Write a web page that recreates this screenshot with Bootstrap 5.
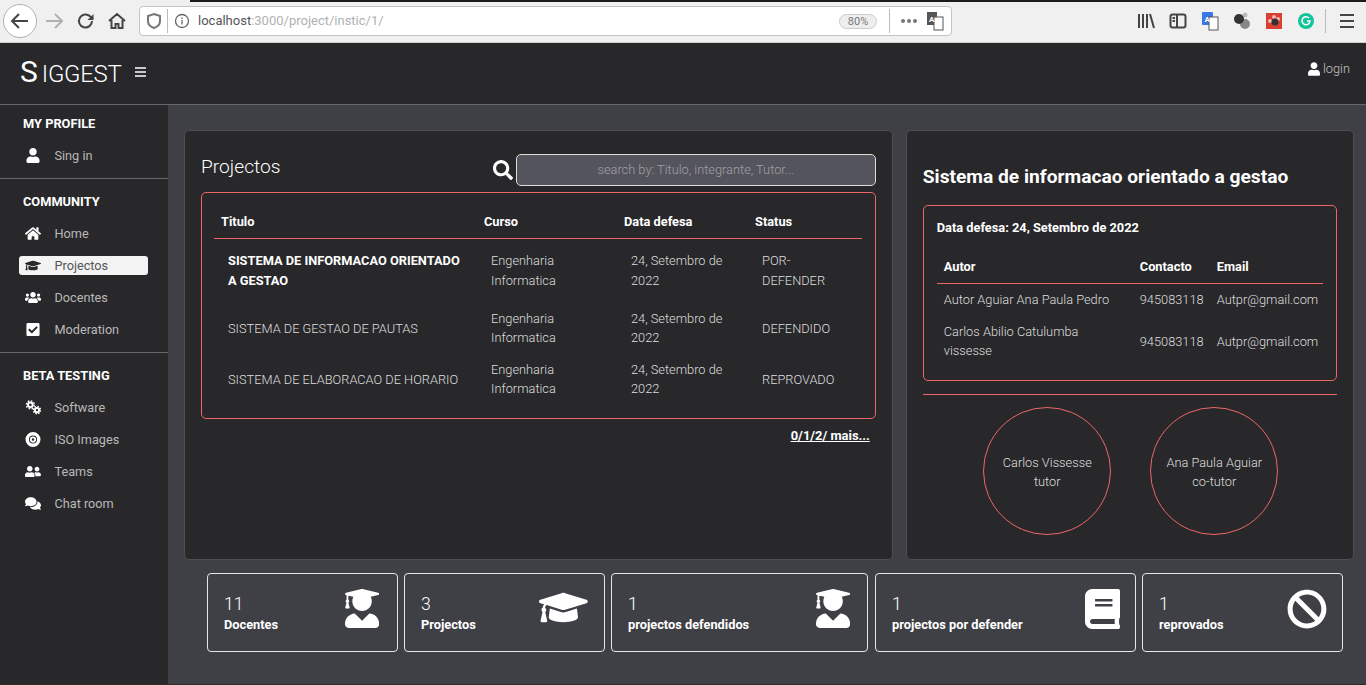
<!DOCTYPE html>
<html lang="en">
<head>
<meta charset="UTF-8">
<title>Siggest</title>
<link href="https://cdn.jsdelivr.net/npm/bootstrap@5.3.3/dist/css/bootstrap.min.css" rel="stylesheet"/>
<style>
  html, body { height: 100%; overflow: hidden; }
  body { font-family: Roboto, "Liberation Sans", sans-serif; font-size: 12.7px; background: #3f3f46; color: #fff; }
  .ff-bar { height: 43px; background: #f0f0f0; border-bottom: 1px solid #d0d0d0; position: relative; }
  .ff-strip { position: absolute; left: 190px; right: 0; top: 0; height: 2px; background: #1c1c1c; }
  .ff-back { width: 34px; height: 34px; margin-left: 3px; border: 1px solid #b1b1b3; border-radius: 50%; background: #fff; }
  .ff-url { width: 813px; height: 30px; margin-left: 11px; background: #fff; border: 1px solid #c4c4c4; border-radius: 4px; color: #b1b1b3; font-size: 13px; padding: 0 5px 0 3px; }
  .ff-url b { color: #55555c; font-weight: 400; }
  .ff-sep { width: 1px; height: 24px; background: #bbb; flex: none; }
  .shield-sep { margin: 0 3px 0 2px; }
  .zoom-sep { margin: 0 8px 0 12px; }
  .ff-zoom { width: 38px; height: 15px; border: 1px solid #ccc; background: #eee; border-radius: 8px; font-size: 11px; line-height: 13px; text-align: center; color: #777; }
  .ff-ico { width: 22px; height: 22px; flex: none; }
  .ff-tools { gap: 10px; }
  .nav-fwd { margin-left: 6px; }
  .nav-reload { margin-left: 10px; }
  .nav-home { margin-left: 9px; }
  .url-text { margin-left: 5px; }
  .tools-sep { margin-left: -2px; }
  .ico-letter { font-family: Roboto, sans-serif; font-size: 8px; font-weight: 700; }
  .top-head { height: 62px; background: #28282b; border-bottom: 1px solid #67676b; padding: 0 16px 0 20px; }
  .brand-row { margin-top: -3px; }
  .brand-name { font-size: 24px; font-weight: 300; color: #fff; letter-spacing: -.3px; line-height: 1; }
  .brand-name span { font-size: 30px; font-weight: 400; margin-right: 4px; letter-spacing: 0; }
  .brand-menu { margin-left: 14px; }
  .login-link { color: #c6c6c6; font-size: 12.8px; text-decoration: none; font-weight: 300; margin-top: -9px; }
  .login-link svg { margin-right: 3px; }
  .page-row { min-height: 0; border-bottom: 1px solid #2b2b2e; }
  .side-col { width: 168px; background: #28282b; flex: none; }
  .side-part { padding: 14px 0 0 0; border-bottom: 1px solid #67676b; }
  .side-part:first-child { padding-top: 10px; }
  .side-part:last-child { border-bottom: 0; }
  .side-title { font-size: 12.8px; font-weight: 700; padding-left: 23px; line-height: 18px; margin-bottom: 13px; color: #fff; }
  .side-link { height: 19px; margin: 0 20px 13px 19px; padding: 0 0 0 6px; border-radius: 3px; color: #b9b9b9; font-size: 12.7px; text-decoration: none; }
  .side-link svg { width: 16px; height: 15px; fill: #fff; flex: none; margin-right: 13.5px; }
  .side-link.now { background: #f3f3f3; color: #555; }
  .side-link.now svg { fill: #28282b; }
  .main-col { padding: 25px 12px 0 16px; min-width: 0; }
  .dark-card { background: #28282b; border: 1px solid #4d4d52; border-radius: 5px; height: 430px; color: #fff; }
  .cards-row { gap: 13px; }
  .left-card { width: 710px; padding: 23px 16px 0 16px; }
  .right-card { width: 449px; padding: 35px 16px 0 16px; }
  .page-title { font-size: 19.2px; font-weight: 300; margin: -6px 0 0; color: #fff; }
  .search-ico { width: 20px; height: 20px; fill: #fff; margin-right: 3px; }
  .search-box.form-control { width: 360px; height: 32px; background: #54545c; border: 1px solid #ddd; border-radius: 5px; font-size: 12.8px; font-weight: 300; text-align: center; color: #fff; padding: 0 8px 2px; box-shadow: none; }
  .search-box::placeholder { color: #a0a0a6; }
  .red-box { border: 1px solid #ee6666; border-radius: 5px; }
  .table-box { margin-top: 6px; height: 227px; padding: 12px 13px 0 12px; }
  .col-titulo { width: 263px; }
  .col-curso { width: 140px; }
  .col-data { width: 131px; }
  .col-autor { width: 197px; }
  .col-contacto { width: 77px; }
  .data-table.table { --bs-table-bg: transparent; --bs-table-color: #dedede; color: #dedede; table-layout: fixed; margin: 0; font-size: 12.8px; font-weight: 300; }
  .data-table th { color: #fff; font-weight: 700; font-size: 12.8px; padding: 7px 7px 7px; border-bottom: 1px solid #ee6666; }
  .data-table td { padding: 6.4px 6.4px 6.4px 14px; border: 0; vertical-align: middle; line-height: 19.2px; }
  .data-table td:first-child { padding-right: 14px; }
  .data-table td:last-child { padding-right: 24px; }
  .data-table tr.first-row td { padding-top: 12px; padding-bottom: 11.5px; line-height: 20px; }
  .data-table td strong { color: #fff; font-weight: 700; font-size: 12.8px; }
  .pager-text { text-align: right; font-weight: 700; font-size: 12.9px; color: #fff; text-decoration: underline; margin: 7px 6px 0 0; }
  .detail-title { font-size: 19.2px; font-weight: 700; margin: 0 0 17px; line-height: 22px; color: #fff; white-space: nowrap; }
  .detail-box { height: 176px; padding: 13px 13px 0; }
  .detail-date { font-size: 12.8px; font-weight: 700; line-height: 18px; margin-bottom: 12px; }
  .detail-table.table th { padding: 8px 6px 7px; font-size: 12.8px; }
  .detail-table.table th:first-child { padding-left: 7px; }
  .detail-table.table td { padding: 5.9px 0 6.9px 6px; }
  .detail-table.table td:first-child { padding-left: 7px; padding-right: 20px; }
  .detail-rule { border: 0; border-top: 1px solid #ee6666; opacity: 1; margin: 13px 0 12px; }
  .tutor-ring { width: 128px; height: 128px; border: 1px solid #ee6666; border-radius: 50%; text-align: center; color: #dedede; font-weight: 300; font-size: 12.8px; line-height: 19.2px; padding: 2px 0 0 1px; }
  .rings-row { gap: 39px; padding-left: 60px; }
  .stats-row { margin: 13px 0 0 23px; gap: 6px; }
  .stat-box { height: 79px; border: 1px solid #e6e6e6; border-radius: 4px; padding: 19px 15px 0 16px; }
  .stat-docentes { width: 191px; }
  .stat-projectos { width: 201px; }
  .stat-defendidos { width: 257px; margin-right: 1px; }
  .stat-defender { width: 261px; }
  .stat-reprovados { width: 201px; }
  .stat-num { font-size: 17.6px; font-weight: 300; line-height: 23px; }
  .stat-label { font-size: 12.8px; font-weight: 700; line-height: 18px; }
  .stat-box svg { fill: #fff; height: 40px; margin-top: -4px; flex: none; }
  .stat-box svg.grad-ico { height: 39px; margin-right: 3px; }
  .stat-box svg.grad-ico.grad-end { margin-right: 2px; }
  .stat-box svg.cap-ico { height: 39px; margin-top: -5px; margin-right: 1px; }
</style>
</head>
<body class="d-flex flex-column">

  <div class="ff-bar d-flex align-items-center flex-none">
    <div class="ff-strip"></div>
    <div class="ff-back d-flex align-items-center justify-content-center">
      <svg class="ff-ico" viewBox="0 0 22 22" fill="none" stroke="#444" stroke-width="2"><path d="M19 11H4M10 4l-7 7 7 7"/></svg>
    </div>
    <svg class="ff-ico nav-fwd" viewBox="0 0 22 22" fill="none" stroke="#b1b1b3" stroke-width="2"><path d="M3 11h15M12 4l7 7-7 7"/></svg>
    <svg class="ff-ico nav-reload" viewBox="0 0 22 22" fill="none" stroke="#444" stroke-width="2"><path d="M17 11a6.500 6.500 0 1 1-2-4.700L18 9"/><path d="M18.500 4v6h-6" fill="#444" stroke="none"/></svg>
    <svg class="ff-ico nav-home" viewBox="0 0 22 22" fill="none" stroke="#444" stroke-width="2"><path d="M3 11l8-7 8 7M5.500 10v8h4v-4h3v4h4v-8"/></svg>
    <div class="ff-url d-flex align-items-center">
      <svg class="ff-ico" viewBox="0 0 22 22" fill="none" stroke="#777" stroke-width="2"><path d="M11 4l6 2v5c0 4-3 6-6 7-3-1-6-3-6-7V6z"/></svg>
      <div class="ff-sep shield-sep"></div>
      <svg class="ff-ico" viewBox="0 0 22 22" fill="none" stroke="#666" stroke-width="1.300"><circle cx="11" cy="11" r="6.500"/><path d="M11 10v4.500M11 7.500v1.500"/></svg>
      <span class="url-text"><b>localhost</b>:3000/project/instic/1/</span>
      <div class="ff-zoom ms-auto">80%</div>
      <div class="ff-sep zoom-sep"></div>
      <svg class="ff-ico" viewBox="0 0 22 22" fill="#777"><circle cx="5" cy="11" r="2"/><circle cx="11" cy="11" r="2"/><circle cx="17" cy="11" r="2"/></svg>
      <svg class="ff-ico ms-1" viewBox="0 0 22 22"><rect x="3" y="2" width="10" height="13" fill="#555"/><rect x="10" y="7" width="9" height="13" fill="#fff" stroke="#555"/><text class="ico-letter" x="5" y="12" fill="#fff">A</text></svg>
    </div>
    <div class="ff-tools d-flex align-items-center ms-auto">
      <svg class="ff-ico" viewBox="0 0 22 22" fill="none" stroke="#444" stroke-width="2"><path d="M4 4v14M8 4v14M12 4v14M15 4l4 14"/></svg>
      <svg class="ff-ico" viewBox="0 0 22 22" fill="none" stroke="#444" stroke-width="2"><rect x="3.500" y="4.500" width="15" height="13" rx="2"/><path d="M10 5v12M5.500 8H8M5.500 11H8"/></svg>
      <svg class="ff-ico" viewBox="0 0 22 22"><rect x="3" y="2" width="11" height="13" rx="1" fill="#3b78e7"/><rect x="10" y="7" width="9" height="13" fill="#fff" stroke="#555"/><text class="ico-letter" x="5.500" y="12" fill="#fff">A</text></svg>
      <svg class="ff-ico" viewBox="0 0 22 22"><circle cx="14" cy="14" r="5" fill="#888"/><circle cx="14" cy="5" r="2.500" fill="#bbb"/><circle cx="8" cy="9" r="5" fill="#333"/></svg>
      <svg class="ff-ico" viewBox="0 0 22 22"><rect x="3" y="3" width="16" height="16" fill="#d94032"/><circle cx="11" cy="7" r="2" fill="#f2b8b2"/><circle cx="7" cy="11" r="2" fill="#f2b8b2"/><circle cx="15" cy="9" r="2" fill="#f2b8b2"/><circle cx="12" cy="12" r="3.500" fill="#333"/></svg>
      <svg class="ff-ico" viewBox="0 0 22 22"><circle cx="11" cy="11" r="8" fill="#15c39a"/><path d="M14 8a4 4 0 1 0 1 3h-3" fill="none" stroke="#fff" stroke-width="1.500"/></svg>
      <div class="ff-sep tools-sep"></div>
      <svg class="ff-ico me-2" viewBox="0 0 22 22" fill="none" stroke="#444" stroke-width="2"><path d="M4 5h14M4 11h14M4 17h14"/></svg>
    </div>
  </div>

  <header class="top-head d-flex align-items-center justify-content-between">
    <div class="brand-row d-flex align-items-center">
      <div class="brand-name"><span>S</span>IGGEST</div>
      <svg class="brand-menu" width="11" height="10" viewBox="0 0 11 10" fill="none" stroke="#fff" stroke-width="1.500"><path d="M0 1h11M0 5h11M0 9h11"/></svg>
    </div>
    <a class="login-link d-flex align-items-center" href="#">
      <svg width="12" height="14" viewBox="0 0 448 512" fill="#fff"><path d="M224 256c70.700 0 128-57.300 128-128S294.700 0 224 0 96 57.300 96 128s57.300 128 128 128zm89.600 32h-16.700c-22.200 10.200-46.900 16-72.900 16s-50.600-5.800-72.900-16h-16.700C60.200 288 0 348.200 0 422.400V464c0 26.500 21.500 48 48 48h352c26.500 0 48-21.500 48-48v-41.600c0-74.200-60.200-134.400-134.400-134.400z"/></svg>login
    </a>
  </header>

  <div class="page-row d-flex flex-grow-1">
    <aside class="side-col">
      <div class="side-part">
        <div class="side-title">MY PROFILE</div>
        <a class="side-link d-flex align-items-center" href="#"><svg viewBox="0 0 448 512"><path d="M224 256c70.700 0 128-57.300 128-128S294.700 0 224 0 96 57.300 96 128s57.300 128 128 128zm89.600 32h-16.700c-22.200 10.200-46.900 16-72.900 16s-50.600-5.800-72.900-16h-16.700C60.200 288 0 348.200 0 422.400V464c0 26.500 21.500 48 48 48h352c26.500 0 48-21.500 48-48v-41.600c0-74.200-60.200-134.400-134.400-134.400z"/></svg>Sing in</a>
      </div>
      <div class="side-part">
        <div class="side-title">COMMUNITY</div>
        <a class="side-link d-flex align-items-center" href="#"><svg viewBox="0 0 576 512"><path d="M280.370 148.260L96 300.110V464a16 16 0 0 0 16 16l112.060-.29a16 16 0 0 0 15.920-16V368a16 16 0 0 1 16-16h64a16 16 0 0 1 16 16v95.640a16 16 0 0 0 16 16.050L464 480a16 16 0 0 0 16-16V300L295.670 148.260a12.190 12.190 0 0 0-15.300 0zM571.600 251.470L488 182.560V44.050a12 12 0 0 0-12-12h-56a12 12 0 0 0-12 12v72.610L318.470 43a48 48 0 0 0-61 0L4.340 251.470a12 12 0 0 0-1.600 16.900l25.500 31A12 12 0 0 0 45.150 301l235.220-193.740a12.190 12.190 0 0 1 15.300 0L530.900 301a12 12 0 0 0 16.900-1.600l25.500-31a12 12 0 0 0-1.700-16.930z"/></svg>Home</a>
        <a class="side-link now d-flex align-items-center" href="#"><svg viewBox="0 0 640 512"><path d="M622.340 153.200L343.400 67.500c-15.200-4.670-31.600-4.670-46.790 0L17.660 153.200c-23.540 7.230-23.540 38.360 0 45.590l48.630 14.940c-10.670 13.190-17.230 29.280-17.880 46.900C38.780 266.150 32 276.110 32 288c0 10.780 5.680 19.850 13.860 25.650L20.330 428.530C18.110 438.520 25.710 448 35.940 448h56.110c10.240 0 17.840-9.480 15.620-19.470L82.140 313.650C90.320 307.850 96 298.780 96 288c0-11.570-6.470-21.250-15.660-26.870.76-15.020 8.440-28.300 20.690-36.720L296.600 284.500c9.060 2.780 26.440 6.250 46.790 0l278.950-85.700c23.550-7.240 23.550-38.360 0-45.600zM352.790 315.090c-28.530 8.760-52.840 3.920-65.590 0l-145.020-44.550L128 384c0 35.350 85.960 64 192 64s192-28.650 192-64l-14.180-113.470-145.030 44.560z"/></svg>Projectos</a>
        <a class="side-link d-flex align-items-center" href="#"><svg viewBox="0 0 640 512"><path d="M96 224c35.300 0 64-28.700 64-64s-28.700-64-64-64-64 28.700-64 64 28.700 64 64 64zm448 0c35.300 0 64-28.700 64-64s-28.700-64-64-64-64 28.700-64 64 28.700 64 64 64zm32 32h-64c-17.600 0-33.500 7.100-45.100 18.600 40.300 22.100 68.900 62 75.100 109.400h66c17.700 0 32-14.300 32-32v-32c0-35.300-28.700-64-64-64zm-256 0c61.900 0 112-50.100 112-112S381.900 32 320 32 208 82.100 208 144s50.100 112 112 112zm76.800 32h-8.300c-20.800 10-43.900 16-68.500 16s-47.600-6-68.500-16h-8.300C179.600 288 128 339.600 128 403.200V432c0 26.500 21.500 48 48 48h288c26.500 0 48-21.500 48-48v-28.800c0-63.600-51.600-115.200-115.200-115.200zm-223.700-13.400C161.500 263.100 145.600 256 128 256H64c-35.300 0-64 28.700-64 64v32c0 17.700 14.300 32 32 32h65.900c6.300-47.400 34.900-87.300 75.200-109.400z"/></svg>Docentes</a>
        <a class="side-link d-flex align-items-center" href="#"><svg viewBox="0 0 448 512"><path d="M400 480H48c-26.510 0-48-21.490-48-48V80c0-26.510 21.490-48 48-48h352c26.510 0 48 21.490 48 48v352c0 26.510-21.490 48-48 48zm-204.686-98.059l184-184c6.248-6.248 6.248-16.379 0-22.627l-22.627-22.627c-6.248-6.248-16.379-6.249-22.628 0L184 302.745l-70.059-70.059c-6.248-6.248-16.379-6.248-22.628 0L68.686 255.314c-6.248 6.248-6.248 16.379 0 22.627l104 104c6.249 6.250 16.379 6.250 22.628 0z"/></svg>Moderation</a>
      </div>
      <div class="side-part">
        <div class="side-title">BETA TESTING</div>
        <a class="side-link d-flex align-items-center" href="#"><svg viewBox="0 0 24 22"><circle cx="8" cy="7" r="3.500" fill="none" stroke="#fff" stroke-width="3"/><circle cx="8" cy="7" r="6" fill="none" stroke="#fff" stroke-width="2" stroke-dasharray="2.500 2.200"/><circle cx="18" cy="15" r="3.200" fill="none" stroke="#fff" stroke-width="3"/><circle cx="18" cy="15" r="5.500" fill="none" stroke="#fff" stroke-width="2" stroke-dasharray="2.300 2"/></svg>Software</a>
        <a class="side-link d-flex align-items-center" href="#"><svg viewBox="0 0 24 24"><path fill-rule="evenodd" d="M12 0a12 12 0 1 0 0 24 12 12 0 0 0 0-24zm0 5.500a6.500 6.500 0 1 1 0 13 6.500 6.500 0 0 1 0-13zm0 1.500a5 5 0 1 0 0 10 5 5 0 0 0 0-10zm0 3a2 2 0 1 1 0 4 2 2 0 0 1 0-4z"/></svg>ISO Images</a>
        <a class="side-link d-flex align-items-center" href="#"><svg viewBox="0 0 640 512"><path d="M192 256c61.900 0 112-50.100 112-112S253.900 32 192 32 80 82.100 80 144s50.100 112 112 112zm76.800 32h-8.300c-20.800 10-43.900 16-68.500 16s-47.600-6-68.500-16h-8.300C51.600 288 0 339.600 0 403.200V432c0 26.500 21.500 48 48 48h288c26.500 0 48-21.500 48-48v-28.800c0-63.600-51.600-115.200-115.200-115.200zM480 256c53 0 96-43 96-96s-43-96-96-96-96 43-96 96 43 96 96 96zm48 32h-3.800c-13.900 4.800-28.600 8-44.200 8s-30.300-3.200-44.200-8H432c-20.400 0-39.200 5.900-55.700 15.400 24.400 26.300 39.700 61.200 39.700 99.800v38.400c0 2.200-.5 4.300-.6 6.400H592c26.500 0 48-21.500 48-48 0-61.900-50.100-112-112-112z"/></svg>Teams</a>
        <a class="side-link d-flex align-items-center" href="#"><svg viewBox="0 0 576 512"><path d="M416 192c0-88.400-93.100-160-208-160S0 103.600 0 192c0 34.300 14.100 65.900 38 92-13.400 30.200-35.500 54.200-35.800 54.500-2.200 2.300-2.800 5.700-1.500 8.700S4.800 352 8 352c36.600 0 66.900-12.300 88.700-25 32.200 15.700 70.300 25 111.300 25 114.900 0 208-71.600 208-160zm122 220c23.900-26 38-57.700 38-92 0-66.900-53.500-124.200-129.300-148.100.9 6.600 1.300 13.300 1.300 20.100 0 105.900-107.700 192-240 192-10.800 0-21.300-.8-31.700-1.900C207.800 439.600 281.800 480 368 480c41 0 79.100-9.200 111.300-25 21.800 12.700 52.100 25 88.700 25 3.200 0 6.100-1.900 7.300-4.800 1.300-2.900.7-6.300-1.500-8.700-.3-.3-22.400-24.200-35.800-54.500z"/></svg>Chat room</a>
      </div>
    </aside>

    <main class="main-col flex-grow-1">
      <div class="cards-row d-flex">
        <section class="dark-card left-card">
          <div class="d-flex align-items-center justify-content-between">
            <h2 class="page-title">Projectos</h2>
            <div class="d-flex align-items-center">
              <svg class="search-ico" viewBox="0 0 512 512"><path d="M505 442.700L405.300 343c-4.500-4.500-10.600-7-17-7H372c27.600-35.300 44-79.700 44-128C416 93.100 322.900 0 208 0S0 93.100 0 208s93.100 208 208 208c48.300 0 92.700-16.400 128-44v16.300c0 6.400 2.500 12.500 7 17l99.700 99.700c9.400 9.400 24.600 9.400 33.900 0l28.300-28.300c9.400-9.400 9.400-24.600.1-34zM208 336c-70.700 0-128-57.200-128-128 0-70.700 57.200-128 128-128 70.700 0 128 57.200 128 128 0 70.700-57.200 128-128 128z"/></svg>
              <input class="search-box form-control" type="text" placeholder="search by: Titulo, integrante, Tutor...">
            </div>
          </div>
          <div class="red-box table-box">
            <table class="data-table table">
              <colgroup><col class="col-titulo"><col class="col-curso"><col class="col-data"><col></colgroup>
              <thead><tr><th>Titulo</th><th>Curso</th><th>Data defesa</th><th>Status</th></tr></thead>
              <tbody>
                <tr class="first-row"><td><strong>SISTEMA DE INFORMACAO ORIENTADO A GESTAO</strong></td><td>Engenharia Informatica</td><td>24, Setembro de 2022</td><td>POR-DEFENDER</td></tr>
                <tr><td>SISTEMA DE GESTAO DE PAUTAS</td><td>Engenharia Informatica</td><td>24, Setembro de 2022</td><td>DEFENDIDO</td></tr>
                <tr><td>SISTEMA DE ELABORACAO DE HORARIO</td><td>Engenharia Informatica</td><td>24, Setembro de 2022</td><td>REPROVADO</td></tr>
              </tbody>
            </table>
          </div>
          <div class="pager-text">0/1/2/ mais...</div>
        </section>

        <section class="dark-card right-card">
          <h3 class="detail-title">Sistema de informacao orientado a gestao</h3>
          <div class="red-box detail-box">
            <div class="detail-date">Data defesa: 24, Setembro de 2022</div>
            <table class="data-table detail-table table">
              <colgroup><col class="col-autor"><col class="col-contacto"><col></colgroup>
              <thead><tr><th>Autor</th><th>Contacto</th><th>Email</th></tr></thead>
              <tbody>
                <tr><td>Autor Aguiar Ana Paula Pedro</td><td>945083118</td><td>Autpr@gmail.com</td></tr>
                <tr><td>Carlos Abilio Catulumba vissesse</td><td>945083118</td><td>Autpr@gmail.com</td></tr>
              </tbody>
            </table>
          </div>
          <hr class="detail-rule">
          <div class="rings-row d-flex">
            <div class="tutor-ring d-flex align-items-center justify-content-center"><div>Carlos Vissesse<br>tutor</div></div>
            <div class="tutor-ring d-flex align-items-center justify-content-center"><div>Ana Paula Aguiar<br>co-tutor</div></div>
          </div>
        </section>
      </div>

      <div class="stats-row d-flex">
        <div class="stat-box stat-docentes d-flex justify-content-between">
          <div><div class="stat-num">11</div><div class="stat-label">Docentes</div></div>
          <svg class="grad-ico" viewBox="0 0 448 512"><path d="M319.400 320.600L224 416l-95.400-95.400C57.100 323.700 0 382.200 0 454.400v9.600c0 26.500 21.500 48 48 48h352c26.500 0 48-21.500 48-48v-9.600c0-72.200-57.100-130.700-128.600-133.800zM13.600 79.800l6.400 1.500v58.400c-7 4.200-12 11.500-12 20.300 0 8.400 4.600 15.400 11.100 19.700L3.500 242c-1.700 6.900 2.100 14 7.600 14h41.800c5.500 0 9.300-7.100 7.600-14l-15.600-62.300C51.400 175.400 56 168.400 56 160c0-8.800-5-16.100-12-20.300V87.100l66 15.900c-8.600 17.200-14 36.400-14 57 0 70.700 57.300 128 128 128s128-57.300 128-128c0-20.600-5.300-39.800-14-57l96.300-23.200c18.200-4.400 18.200-27.100 0-31.500l-190.400-46c-13-3.100-26.700-3.100-39.700 0L13.600 48.200c-18.100 4.400-18.100 27.200 0 31.600z"/></svg>
        </div>
        <div class="stat-box stat-projectos d-flex justify-content-between">
          <div><div class="stat-num">3</div><div class="stat-label">Projectos</div></div>
          <svg class="cap-ico" viewBox="0 0 640 512"><path d="M622.340 153.200L343.400 67.500c-15.200-4.670-31.600-4.670-46.790 0L17.660 153.200c-23.540 7.230-23.540 38.360 0 45.590l48.630 14.940c-10.670 13.190-17.230 29.280-17.880 46.900C38.780 266.150 32 276.110 32 288c0 10.780 5.680 19.850 13.860 25.650L20.330 428.530C18.110 438.520 25.710 448 35.940 448h56.110c10.240 0 17.840-9.480 15.620-19.470L82.140 313.650C90.320 307.850 96 298.780 96 288c0-11.570-6.470-21.250-15.660-26.870.76-15.020 8.440-28.300 20.690-36.720L296.600 284.500c9.060 2.780 26.440 6.250 46.790 0l278.950-85.700c23.550-7.240 23.550-38.360 0-45.600zM352.790 315.090c-28.530 8.760-52.840 3.920-65.590 0l-145.020-44.550L128 384c0 35.350 85.960 64 192 64s192-28.650 192-64l-14.180-113.470-145.030 44.560z"/></svg>
        </div>
        <div class="stat-box stat-defendidos d-flex justify-content-between">
          <div><div class="stat-num">1</div><div class="stat-label">projectos defendidos</div></div>
          <svg class="grad-ico grad-end" viewBox="0 0 448 512"><path d="M319.400 320.600L224 416l-95.400-95.400C57.100 323.700 0 382.200 0 454.400v9.600c0 26.500 21.500 48 48 48h352c26.500 0 48-21.500 48-48v-9.600c0-72.200-57.100-130.700-128.600-133.800zM13.600 79.800l6.400 1.500v58.400c-7 4.200-12 11.500-12 20.300 0 8.400 4.600 15.400 11.100 19.700L3.500 242c-1.700 6.900 2.100 14 7.600 14h41.800c5.500 0 9.300-7.100 7.600-14l-15.600-62.300C51.400 175.400 56 168.400 56 160c0-8.800-5-16.100-12-20.300V87.100l66 15.900c-8.600 17.200-14 36.400-14 57 0 70.700 57.300 128 128 128s128-57.300 128-128c0-20.600-5.300-39.800-14-57l96.300-23.200c18.200-4.400 18.200-27.100 0-31.500l-190.400-46c-13-3.100-26.700-3.100-39.700 0L13.600 48.200c-18.100 4.400-18.100 27.200 0 31.600z"/></svg>
        </div>
        <div class="stat-box stat-defender d-flex justify-content-between">
          <div><div class="stat-num">1</div><div class="stat-label">projectos por defender</div></div>
          <svg viewBox="0 0 448 512"><path d="M448 360V24c0-13.300-10.700-24-24-24H96C43 0 0 43 0 96v320c0 53 43 96 96 96h328c13.300 0 24-10.700 24-24v-16c0-7.500-3.500-14.300-8.900-18.700-4.200-15.400-4.200-59.300 0-74.700 5.400-4.300 8.900-11.100 8.900-18.600zM128 134c0-3.300 2.700-6 6-6h212c3.300 0 6 2.700 6 6v20c0 3.300-2.700 6-6 6H134c-3.300 0-6-2.700-6-6v-20zm0 64c0-3.300 2.700-6 6-6h212c3.300 0 6 2.700 6 6v20c0 3.300-2.700 6-6 6H134c-3.300 0-6-2.700-6-6v-20zm253.400 250H96c-17.700 0-32-14.300-32-32 0-17.600 14.400-32 32-32h285.400c-1.900 17.100-1.900 46.900 0 64z"/></svg>
        </div>
        <div class="stat-box stat-reprovados d-flex justify-content-between">
          <div><div class="stat-num">1</div><div class="stat-label">reprovados</div></div>
          <svg viewBox="0 0 512 512"><path d="M256 8C119.034 8 8 119.033 8 256s111.034 248 248 248 248-111.034 248-248S392.967 8 256 8zm130.108 117.892c65.448 65.448 70 165.481 20.677 235.637L150.470 105.216c70.204-49.356 170.226-44.735 235.638 20.676zM125.892 386.108c-65.448-65.448-70-165.481-20.677-235.637L361.530 406.784c-70.203 49.356-170.226 44.736-235.638-20.676z"/></svg>
        </div>
      </div>
    </main>
  </div>

<script src="https://cdn.jsdelivr.net/npm/bootstrap@5.3.3/dist/js/bootstrap.bundle.min.js"></script>
</body>
</html>
